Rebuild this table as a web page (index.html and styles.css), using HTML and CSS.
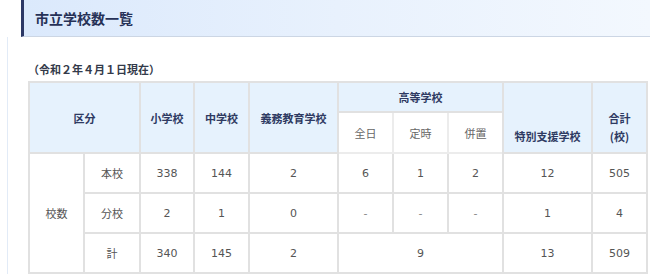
FILE: index.html
```html
<!DOCTYPE html>
<html lang="ja">
<head>
<meta charset="utf-8">
<link rel="stylesheet" href="styles.css">
</head>
<body>
<h2 class="heading">市立学校数一覧</h2>
<div class="content">
  <p class="caption">（令和２年４月１日現在）</p>
  <table class="schools">
    <colgroup>
      <col class="c55"><col class="c56"><col class="c54"><col class="c55"><col class="c89">
      <col class="c55"><col class="c55"><col class="c55"><col class="c89"><col class="c55">
    </colgroup>
    <thead>
      <tr class="h1">
        <th colspan="2" rowspan="2">区分</th>
        <th rowspan="2">小学校</th>
        <th rowspan="2">中学校</th>
        <th rowspan="2">義務教育学校</th>
        <th colspan="3">高等学校</th>
        <th rowspan="2" class="low">特別支援学校</th>
        <th rowspan="2" class="low">合計<br>(校)</th>
      </tr>
      <tr class="h2">
        <td class="sub">全日</td>
        <td class="sub">定時</td>
        <td class="sub">併置</td>
      </tr>
    </thead>
    <tbody>
      <tr>
        <td rowspan="3">校数</td>
        <td>本校</td>
        <td>338</td><td>144</td><td>2</td><td>6</td><td>1</td><td>2</td><td>12</td><td>505</td>
      </tr>
      <tr>
        <td>分校</td>
        <td>2</td><td>1</td><td>0</td><td class="dash">-</td><td class="dash">-</td><td class="dash">-</td><td>1</td><td>4</td>
      </tr>
      <tr>
        <td>計</td>
        <td>340</td><td>145</td><td>2</td><td colspan="3">9</td><td>13</td><td>509</td>
      </tr>
    </tbody>
  </table>
</div>
</body>
</html>
```
FILE: styles.css
```css
html, body {
  margin: 0;
  padding: 0;
  height: 100%;
  background: #fff;
  font-family: "DejaVu Sans", "Noto Sans CJK JP", sans-serif;
  overflow: hidden;
}

.heading {
  margin: 0 0 0 21px;
  height: 37px;
  box-sizing: border-box;
  border-left: 3px solid #2c3866;
  border-bottom: 1px solid #ccd6e4;
  background: linear-gradient(to right, #dbe9fc 0%, #e8f1fd 50%, #f3f8fe 100%);
  padding-left: 11px;
  font-family: "Noto Sans CJK JP", sans-serif;
  font-size: 14px;
  font-weight: 700;
  line-height: 36px;
  color: #263157;
}

.content {
  margin-left: 7px;
  border-left: 1px solid #e2ebf7;
  padding: 25px 0 0 20px;
  height: calc(100% - 37px);
  box-sizing: border-box;
  overflow: hidden;
}

.caption {
  margin: 0 0 5px 0;
  font-family: "Noto Sans CJK JP", sans-serif;
  font-size: 11px;
  font-weight: 700;
  line-height: 14px;
  color: #333a4a;
}

.schools {
  border-collapse: collapse;
  table-layout: fixed;
  width: 618px;
  font-size: 11px;
}

.c54 { width: 54px; }
.c55 { width: 55px; }
.c56 { width: 56px; }
.c89 { width: 89px; }

.schools th,
.schools td {
  border: 2px solid #e1e1e1;
  padding: 0;
  text-align: center;
  vertical-align: middle;
}

.schools th {
  background: #e6f2fd;
  color: #2e3a62;
  font-family: "Noto Sans CJK JP", sans-serif;
  font-weight: 700;
  line-height: 18px;
}

.schools th.low {
  vertical-align: bottom;
  padding-bottom: 7px;
}

.h1 { height: 30px; }
.h2 { height: 41px; }
.schools tbody tr { height: 40px; }

.schools td {
  color: #555;
  background: #fff;
}

.schools td.sub {
  border-color: #ececec;
  color: #666;
  font-family: "Noto Sans CJK JP", sans-serif;
}

.schools td.dash {
  color: #888;
}
```
